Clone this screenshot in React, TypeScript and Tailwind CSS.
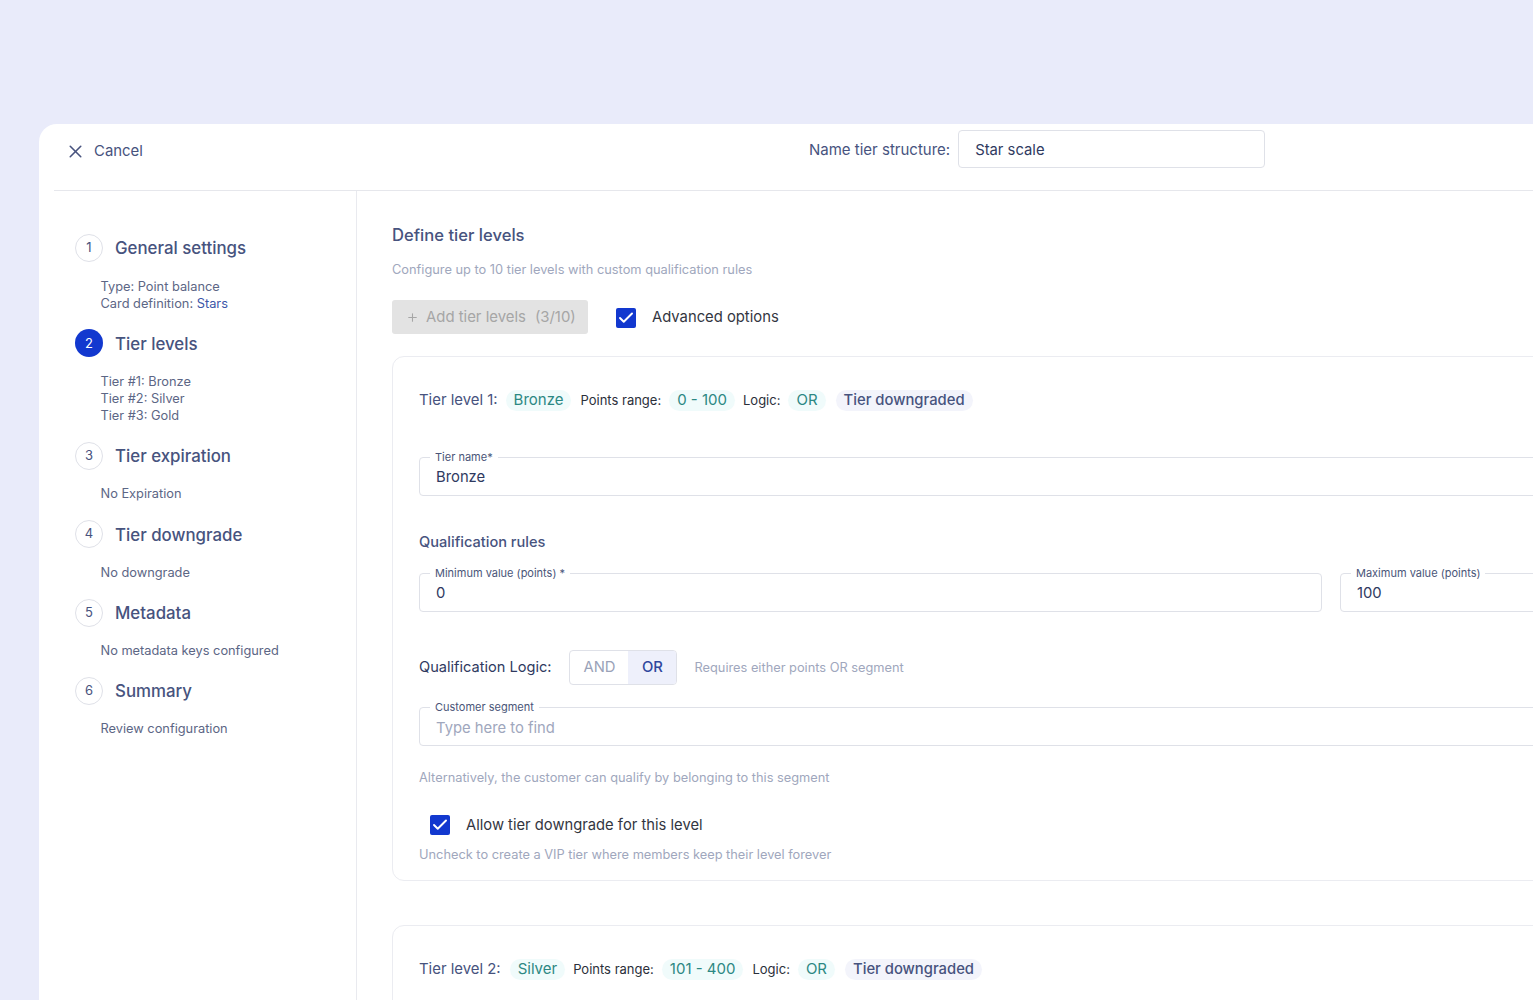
import { Check, Plus, X } from "lucide-react"

const steps = [
  { n: 1, title: "General settings", lines: ["Type: Point balance", "Card definition: "] },
  { n: 2, title: "Tier levels", lines: ["Tier #1: Bronze", "Tier #2: Silver", "Tier #3: Gold"] },
  { n: 3, title: "Tier expiration", lines: ["No Expiration"] },
  { n: 4, title: "Tier downgrade", lines: ["No downgrade"] },
  { n: 5, title: "Metadata", lines: ["No metadata keys configured"] },
  { n: 6, title: "Summary", lines: ["Review configuration"] },
]

function Pill({ children, muted }: { children: React.ReactNode; muted?: boolean }) {
  return (
    <span
      className={
        muted
          ? "rounded-full bg-[#f3f4fb] px-2 h-[21px] flex items-center text-[14.8px] font-[450] text-[#47537e]"
          : "rounded-full bg-[#f0fbfb] px-2 h-[21px] flex items-center text-[15px] text-[#2c8883]"
      }
    >
      {children}
    </span>
  )
}

function TierHeader(props: { label: string; name: string; range: string; labelGap: string; rangeGap: string; logicGap: string; lastGap: string }) {
  return (
    <div className="flex items-center h-[21px] whitespace-nowrap">
      <span className={`text-[14.9px] text-[#47537e] ${props.labelGap}`}>{props.label}</span>
      <Pill>{props.name}</Pill>
      <span className={`text-[13px] text-[#2b2f3a] ${props.rangeGap}`}>Points range:</span>
      <Pill>{props.range}</Pill>
      <span className={`text-[13px] text-[#2b2f3a] mr-[8px] ${props.logicGap}`}>Logic:</span>
      <Pill>OR</Pill>
      <span className={props.lastGap} />
      <Pill muted>Tier downgraded</Pill>
    </div>
  )
}

function Field({ label, value, placeholder, className }: { label: string; value?: string; placeholder?: boolean; className?: string }) {
  return (
    <div className={`relative h-[39px] rounded-[4px] border border-[#dfe1e8] ${className ?? ""}`}>
      <span className="absolute left-[10px] -top-[7px] bg-white px-[5px] text-[11px] leading-[13px] text-[#4a5578]">{label}</span>
      <div className={`pl-[16px] text-[14.8px] leading-[20px] ${placeholder ? "pt-[10px] text-[#a0a7bd]" : "pt-[9px] text-[#2f3a5f]"}`}>{value}</div>
    </div>
  )
}

function Box() {
  return (
    <span className="flex h-[20px] w-[20px] shrink-0 items-center justify-center rounded-[2px] bg-[#1238cf]">
      <Check className="h-[18px] w-[18px] text-white" strokeWidth={2.6} />
    </span>
  )
}

export default function App() {
  return (
    <div className="h-[1000px] w-[1533px] overflow-hidden bg-[#e9ebfa] pt-[124px] pl-[39px] font-['Inter',sans-serif]">
      <div className="h-[1000px] w-[1700px] rounded-tl-[18px] bg-white">
        {/* top bar */}
        <div className="ml-[15px] flex h-[67px] items-start border-b border-[#e6e7ec] whitespace-nowrap">
          <div className="flex h-[54px] w-[755px] items-center pl-[11px]">
            <X className="h-[21px] w-[21px] text-[#47537e]" strokeWidth={1.8} />
            <span className="ml-[8px] mt-[1px] text-[14.9px] text-[#47537e]">Cancel</span>
          </div>
          <div className="flex h-[50px] items-center">
            <span className="mt-[2px] text-[15px] text-[#47537e]">Name tier structure:</span>
            <div className="ml-[8px] flex h-[38px] w-[307px] items-center rounded-[4px] border border-[#dfe1e8] pl-[16px] pt-[2px] text-[14.8px] text-[#2f3a5f]">
              Star scale
            </div>
          </div>
        </div>

        <div className="flex">
          {/* steps */}
          <div className="ml-[15px] h-[900px] w-[303px] shrink-0 border-r border-[#e9eaef] pl-[21px] pt-[43px] whitespace-nowrap">
            {steps.map((s) => (
              <div key={s.n} className="mb-[17.9px]">
                <div className="flex h-[28px] items-center">
                  <span
                    className={
                      s.n === 2
                        ? "flex h-[28px] w-[28px] items-center justify-center rounded-full bg-[#1238cf] text-[13px] text-white"
                        : "flex h-[28px] w-[28px] items-center justify-center rounded-full border border-[#dfe1e8] text-[13px] text-[#47537e]"
                    }
                  >
                    {s.n}
                  </span>
                  <span className="ml-[12px] mt-[2px] text-[16.85px] font-medium text-[#47537e]">{s.title}</span>
                </div>
                <div className="mt-[15.5px] pl-[25.5px] text-[12.8px] leading-[17px] text-[#5c6685]">
                  {s.lines.map((l) => (
                    <div key={l}>
                      {l}
                      {l.startsWith("Card") && <span className="text-[#3c56a8]">Stars</span>}
                    </div>
                  ))}
                </div>
              </div>
            ))}
          </div>

          {/* tier levels */}
          <div className="pl-[35px] pt-[33px] whitespace-nowrap">
            <h2 className="text-[16.6px] leading-[22px] font-[450] text-[#47537e]">Define tier levels</h2>
            <p className="mt-[15px] text-[12.8px] leading-[17px] text-[#a0a7bd]">Configure up to 10 tier levels with custom qualification rules</p>

            <div className="mt-[22px] flex items-center">
              <button className="flex h-[34px] w-[196px] items-center rounded-[3px] bg-[#e3e3e3] pl-[14px] pt-[1px] text-[14.9px] text-[#a6a6a6]">
                <Plus className="mr-[7px] h-[13px] w-[13px]" strokeWidth={2} />
                Add tier levels
                <span className="ml-[9px]">(3/10)</span>
              </button>
              <span className="ml-[28px] mt-[1px]"><Box /></span>
              <span className="ml-[16px] mt-[1px] text-[14.8px] text-[#33363f]">Advanced options</span>
            </div>

            {/* tier 1 */}
            <div className="mt-[22px] h-[525px] w-[1200px] rounded-[12px] border border-[#ebecf1] px-[26px] pt-[33px]">
              <TierHeader label="Tier level 1:" name="Bronze" range="0 - 100" labelGap="mr-[8px]" rangeGap="ml-[9px] mr-[8px]" logicGap="ml-[8px]" lastGap="w-[10px]" />

              <Field label="Tier name*" value="Bronze" className="mt-[46px]" />

              <h3 className="mt-[36px] text-[14.6px] leading-[20px] font-[450] text-[#47537e]">Qualification rules</h3>
              <div className="mt-[21px] flex gap-[18px]">
                <Field label="Minimum value (points)  *" value="0" className="w-[903px]" />
                <Field label="Maximum value (points)" value="100" className="flex-1" />
              </div>

              <div className="mt-[38px] flex items-center">
                <span className="mt-[1px] text-[14.6px] text-[#2f3a5f]">Qualification Logic:</span>
                <div className="ml-[18px] flex h-[35px] overflow-hidden rounded-[4px] border border-[#dfe1e8] text-[14.8px]">
                  <span className="flex w-[58px] items-center justify-center text-[#9aa2b8]">AND</span>
                  <span className="flex w-[48px] items-center justify-center bg-[#eef0fb] font-medium text-[#2f479e]">OR</span>
                </div>
                <span className="ml-[17px] text-[12.8px] text-[#a0a7bd]">Requires either points OR segment</span>
              </div>

              <Field label="Customer segment" value="Type here to find" placeholder className="mt-[22px]" />

              <p className="mt-[23px] text-[12.8px] leading-[17px] text-[#a0a7bd]">Alternatively, the customer can qualify by belonging to this segment</p>

              <div className="mt-[28px] ml-[11px] flex items-center">
                <Box />
                <span className="ml-[16px] text-[14.75px] text-[#33363f]">Allow tier downgrade for this level</span>
              </div>
              <p className="mt-[10px] text-[12.8px] leading-[17px] text-[#a0a7bd]">Uncheck to create a VIP tier where members keep their level forever</p>
            </div>

            {/* tier 2 */}
            <div className="mt-[44px] h-[300px] w-[1200px] rounded-[12px] border border-[#ebecf1] px-[26px] pt-[33px]">
              <TierHeader label="Tier level 2:" name="Silver" range="101 - 400" labelGap="mr-[9px]" rangeGap="ml-[8px] mr-[8px]" logicGap="ml-[9px]" lastGap="w-[10px]" />
            </div>
          </div>
        </div>
      </div>
    </div>
  )
}
